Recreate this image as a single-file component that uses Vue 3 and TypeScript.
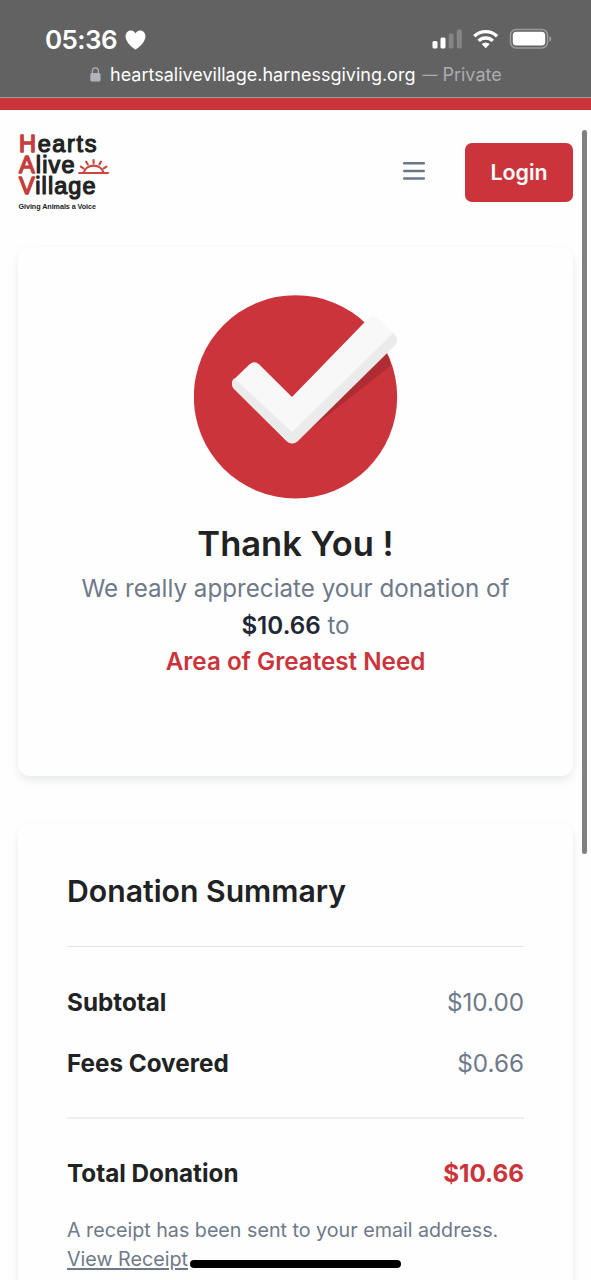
<script setup lang="ts">
interface SummaryRow {
  label: string
  amount: string
}

const rows: SummaryRow[] = [
  { label: 'Subtotal', amount: '$10.00' },
  { label: 'Fees Covered', amount: '$0.66' },
]
const total = '$10.66'
</script>

<template>
  <div class="screen">
    <header class="status">
      <div class="status-row">
        <div class="clock">
          <span class="time">05:36</span>
          <svg class="heart" width="21" height="20" viewBox="0 0 22 20" preserveAspectRatio="none">
            <path d="M11 19.6C9.2 18.4.6 12.8.6 6.4.6 2.9 3 .5 6 .5c2.2 0 4 1.200 5 3.100C12 1.700 13.800.5 16 .5c3 0 5.400 2.400 5.400 5.900 0 6.400-8.600 12-10.400 13.200z" fill="#fff" />
          </svg>
        </div>
        <svg class="indicators" width="120" height="22" viewBox="0 0 120 22">
          <rect x="0.500" y="13" width="5" height="7.500" rx="1.500" fill="#fff" />
          <rect x="8.500" y="9.500" width="5" height="11" rx="1.500" fill="#fff" />
          <rect x="16.700" y="5.500" width="5" height="15" rx="1.500" fill="#858585" />
          <rect x="24.800" y="1.500" width="5" height="19" rx="1.500" fill="#858585" />
          <g fill="none" stroke="#fff" stroke-width="3.400">
            <path d="M42.300 8.300a16.300 16.300 0 0 1 22.800 0" />
            <path d="M46.600 12.900a10.200 10.200 0 0 1 14.200 0" />
          </g>
          <path d="M49.700 16.100a5.800 5.800 0 0 1 8 0l-4 4.100z" fill="#fff" />
          <rect x="78.500" y="1.500" width="37" height="18.400" rx="5.600" fill="none" stroke="#9b9b9b" stroke-width="1.500" />
          <rect x="80.800" y="3.800" width="32.400" height="13.800" rx="3.500" fill="#fff" />
          <path d="M117.200 8c2.800.8 2.800 5 0 5.800z" fill="#9b9b9b" />
        </svg>
      </div>
      <div class="address">
        <svg class="lock" width="11" height="15" viewBox="0 0 11 15">
          <rect x="0.300" y="6" width="10.200" height="8.500" rx="1.600" fill="#b3b1ba" />
          <path d="M2.400 6.500V4.200a3 3.300 0 0 1 6 0v2.300" fill="none" stroke="#b3b1ba" stroke-width="1.300" />
        </svg>
        <span class="domain">heartsalivevillage.harnessgiving.org</span>
        <span class="private"><span class="dash">—</span> Private</span>
      </div>
    </header>
    <div class="stripe"></div>

    <nav class="nav">
      <svg class="logo" width="94" height="82" viewBox="0 0 94 82">
        <g class="wordmark">
          <text x="1" y="22" textLength="77.500"><tspan class="initial">H</tspan>earts</text>
          <text x="1" y="43.200" textLength="55.500"><tspan class="initial">A</tspan>live</text>
          <text x="1" y="64.400" textLength="76.500"><tspan class="initial">V</tspan>illage</text>
        </g>
        <text class="tagline" x="0.500" y="78.800" textLength="77.500">Giving Animals a Voice</text>
        <g class="sun">
          <path d="M61.200 43H90M65.700 42.500a10.200 9 0 0 1 19.800 0M75.600 33.300v-3.300M69.800 34.500l-1.600-2.800M81.400 34.500l1.600-2.800M65.500 38.300l-2.700-1.600M85.700 38.300l2.700-1.600" />
        </g>
      </svg>
      <div class="actions">
        <svg class="menu" width="22" height="20" viewBox="0 0 22 20">
          <path d="M1.200 2.200h19.600M1.200 9.900h19.600M1.200 17.500h19.600" stroke="#6b7789" stroke-width="2.500" stroke-linecap="round" />
        </svg>
        <button class="login">Login</button>
      </div>
    </nav>

    <main class="content">
      <section class="card thanks">
        <svg class="check" width="204" height="204" viewBox="42 45 612 612">
          <circle cx="346.500" cy="350.500" r="305" fill="#cb343b" />
          <path d="M375 460L618 217Q627 236 632 257L392 446z" fill="#ae2c32" />
          <path d="M159 301L209 253Q223 241 237 253L336 351L564 116Q577 102 591 112L642 160Q651 169 651 181L353 482Q336 497 320 482L160 325Q152 313 159 301z" fill="#f8f8f8" />
          <path d="M162 295L336 456L639 160L645 166Q657 180 646 195L353 484Q336 497 320 484L163 327Q149 311 162 295z" fill="#ebebeb" />
        </svg>
        <h1 class="title">Thank You !</h1>
        <p class="message">
          <span class="lead">We really appreciate your donation of</span><br>
          <strong class="amount">{{ total }}</strong> to<br>
          <strong class="fund">Area of Greatest Need</strong>
        </p>
      </section>

      <section class="card summary">
        <h2 class="heading">Donation Summary</h2>
        <div class="rows">
          <div v-for="row in rows" :key="row.label" class="row">
            <span class="label">{{ row.label }}</span>
            <span class="value">{{ row.amount }}</span>
          </div>
        </div>
        <div class="row total">
          <span class="label">Total Donation</span>
          <span class="value">{{ total }}</span>
        </div>
        <p class="receipt">
          <span class="note">A receipt has been sent to your email address.</span><br>
          <a class="link">View Receipt</a>
        </p>
      </section>
    </main>

    <div class="scrollbar"></div>
    <div class="home"></div>
  </div>
</template>

<style>
body {
  margin: 0;
  overflow: hidden;
}
</style>

<style scoped>
.screen {
  position: relative;
  width: 591px;
  height: 1280px;
  overflow: hidden;
  background: #fefefe;
  font-family: Inter, "Liberation Sans", sans-serif;
  color: #212223;
}
.status {
  box-sizing: border-box;
  height: 98px;
  padding-top: 24px;
  background: #626262;
  border-bottom: 1px solid #a39c9c;
}
.status-row {
  display: flex;
  justify-content: space-between;
  height: 32px;
  padding: 0 39px 0 45px;
}
.clock {
  display: flex;
  align-items: center;
  gap: 8px;
}
.time {
  color: #fff;
  font-size: 26px;
  font-weight: 600;
  letter-spacing: -0.600px;
  line-height: 32px;
}
.indicators {
  margin-top: 4px;
}
.address {
  display: flex;
  align-items: center;
  height: 24px;
  margin-top: 7px;
  padding-left: 90px;
  font-size: 18px;
  line-height: 24px;
  white-space: nowrap;
}
.lock {
  margin: -2px 9px 0 0;
}
.domain {
  color: #fff;
}
.private {
  display: flex;
  gap: 5px;
  margin-left: 7px;
  color: #acabb0;
}
.dash {
  font-size: 15px;
}
.stripe {
  height: 12px;
  background: #cb343b;
}
.nav {
  display: flex;
  justify-content: space-between;
  align-items: flex-start;
  height: 137px;
  padding: 0 18px;
}
.logo {
  margin-top: 20px;
}
.wordmark {
  font: 23.500px "Liberation Sans", sans-serif;
  fill: #222;
  stroke: #222;
  stroke-width: 1.200px;
  stroke-linejoin: round;
}
.initial {
  fill: #c43e3d;
  stroke: #c43e3d;
  stroke-width: 1.500px;
}
.tagline {
  font: bold 7.200px "Liberation Sans", sans-serif;
  fill: #222;
}
.sun {
  fill: none;
  stroke: #c9453f;
  stroke-width: 2.100;
  stroke-linecap: round;
}
.actions {
  display: flex;
  align-items: center;
  gap: 40px;
  margin-top: 33px;
}
.menu {
  margin-top: -3px;
}
.login {
  width: 108px;
  height: 59px;
  padding: 0;
  border: 0;
  border-radius: 7px;
  background: #cb343b;
  color: #fff;
  font: 600 21.400px/59px Inter, sans-serif;
}
.content {
  display: flex;
  flex-direction: column;
  gap: 48px;
  padding: 0 18px;
}
.card {
  box-sizing: border-box;
  border-radius: 12px;
  background: #fefefe;
  box-shadow: 0 6px 9px -1.500px rgba(30, 40, 55, 0.07), 0 1px 12px rgba(30, 40, 55, 0.035);
}
.thanks {
  display: flex;
  flex-direction: column;
  align-items: center;
  height: 529px;
  padding-top: 48px;
  text-align: center;
}
.title {
  margin: 21px 0 0;
  font-size: 34.500px;
  font-weight: 600;
  line-height: 48px;
}
.message {
  margin: 3.200px 0 0;
  color: #6e7989;
  font-size: 24.200px;
  line-height: 36.400px;
}
.amount {
  color: #212735;
  font-weight: 600;
}
.fund {
  color: #cb343b;
  font-weight: 600;
}
.summary {
  height: 520px;
  padding: 45px 49px 0;
}
.heading {
  margin: 0 0 33px;
  font-size: 30.200px;
  font-weight: 600;
  line-height: 44px;
}
.rows {
  display: flex;
  flex-direction: column;
  gap: 24px;
  padding: 38px 0 35px;
  border-top: 1px solid #e5e5e9;
  border-bottom: 2px solid #eee;
}
.row {
  display: flex;
  justify-content: space-between;
  font-size: 24.250px;
  line-height: 36.500px;
}
.label {
  font-weight: 700;
}
.value {
  color: #6e7989;
}
.total {
  margin-top: 37px;
}
.total .value {
  color: #cb343b;
  font-weight: 700;
}
.receipt {
  margin: 23px 0 0;
  color: #6e7989;
  font-size: 19.700px;
  line-height: 29.200px;
}
.link {
  text-decoration: underline;
  text-decoration-thickness: 1.500px;
  text-underline-offset: 2px;
}
.scrollbar {
  position: absolute;
  top: 130px;
  left: 582px;
  width: 5px;
  height: 724px;
  border-radius: 3px;
  background: #808080;
}
.home {
  position: absolute;
  top: 1260px;
  left: 190px;
  width: 211px;
  height: 8px;
  border-radius: 4px;
  background: #000;
}
</style>
